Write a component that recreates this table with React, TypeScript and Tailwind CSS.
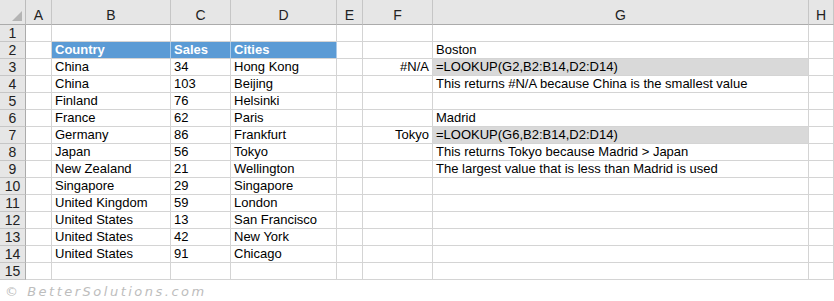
const cols = ["A", "B", "C", "D", "E", "F", "G", "H"]

type Cell = { text?: string; kind?: "head" | "formula" | "right" }

// row number -> column letter -> cell
const sheet: Record<number, Record<string, Cell>> = {
  2: {
    B: { text: "Country", kind: "head" },
    C: { text: "Sales", kind: "head" },
    D: { text: "Cities", kind: "head" },
    G: { text: "Boston" },
  },
  3: {
    B: { text: "China" },
    C: { text: "34" },
    D: { text: "Hong Kong" },
    F: { text: "#N/A", kind: "right" },
    G: { text: "=LOOKUP(G2,B2:B14,D2:D14)", kind: "formula" },
  },
  4: {
    B: { text: "China" },
    C: { text: "103" },
    D: { text: "Beijing" },
    G: { text: "This returns #N/A because China is the smallest value" },
  },
  5: { B: { text: "Finland" }, C: { text: "76" }, D: { text: "Helsinki" } },
  6: {
    B: { text: "France" },
    C: { text: "62" },
    D: { text: "Paris" },
    G: { text: "Madrid" },
  },
  7: {
    B: { text: "Germany" },
    C: { text: "86" },
    D: { text: "Frankfurt" },
    F: { text: "Tokyo", kind: "right" },
    G: { text: "=LOOKUP(G6,B2:B14,D2:D14)", kind: "formula" },
  },
  8: {
    B: { text: "Japan" },
    C: { text: "56" },
    D: { text: "Tokyo" },
    G: { text: "This returns Tokyo because Madrid > Japan" },
  },
  9: {
    B: { text: "New Zealand" },
    C: { text: "21" },
    D: { text: "Wellington" },
    G: { text: "The largest value that is less than Madrid is used" },
  },
  10: { B: { text: "Singapore" }, C: { text: "29" }, D: { text: "Singapore" } },
  11: { B: { text: "United Kingdom" }, C: { text: "59" }, D: { text: "London" } },
  12: { B: { text: "United States" }, C: { text: "13" }, D: { text: "San Francisco" } },
  13: { B: { text: "United States" }, C: { text: "42" }, D: { text: "New York" } },
  14: { B: { text: "United States" }, C: { text: "91" }, D: { text: "Chicago" } },
}

const rows = Array.from({ length: 15 }, (_, i) => i + 1)

function SheetCell({ cell }: { cell?: Cell }) {
  if (cell?.kind === "head") {
    return (
      <div className="flex h-[17px] items-end border-r border-b border-r-[#a9c9e8] border-b-[#d4d4d4] bg-[#5b9bd5] px-[3px] font-bold leading-[16px] text-white">
        {cell.text}
      </div>
    )
  }
  if (cell?.kind === "formula") {
    return (
      <div className="flex h-[17px] items-end border-r border-b border-[#d4d4d4] bg-[#d9d9d9] px-[3px] leading-[16px] whitespace-nowrap">
        {cell.text}
      </div>
    )
  }
  return (
    <div
      className={
        cell?.kind === "right"
          ? "flex h-[17px] items-end justify-end border-r border-b border-[#d4d4d4] px-[3px] leading-[16px] whitespace-nowrap"
          : "flex h-[17px] items-end border-r border-b border-[#d4d4d4] px-[3px] leading-[16px] whitespace-nowrap"
      }
    >
      {cell?.text ?? ""}
    </div>
  )
}

export default function App() {
  return (
    <div className="h-[301px] w-[834px] overflow-hidden bg-white font-['Liberation_Sans',Arial,sans-serif] text-[13px] text-black">
      <div className="grid grid-cols-[26px_26px_119px_60px_106px_26px_70px_376px_25px]">
        {/* Corner */}
        <div className="flex h-[25px] items-end justify-end border-r border-b border-r-[#bcbcbc] border-b-[#ababab] bg-[#e6e6e6] pr-[3px] pb-[3px]">
          <svg width="10" height="10" viewBox="0 0 10 10">
            <polygon points="10,0 10,10 0,10" fill="#b4b4b4" />
          </svg>
        </div>

        {/* Column headers */}
        {cols.map((c) => (
          <div
            key={c}
            className="flex h-[25px] items-end justify-center border-r border-b border-r-[#c6c6c6] border-b-[#ababab] bg-[#e6e6e6] pb-[1px] text-[14px] leading-[16px] text-[#222]"
          >
            {c}
          </div>
        ))}

        {rows.map((r) => (
          <div key={r} className="contents">
            <div className="flex h-[17px] items-end justify-center border-r border-b border-r-[#ababab] border-b-[#c6c6c6] bg-[#e6e6e6] text-[14px] leading-[16px] text-[#222]">
              {r}
            </div>
            {cols.map((c) => (
              <SheetCell key={c} cell={sheet[r]?.[c]} />
            ))}
          </div>
        ))}
      </div>

      <div className="pt-[2px] pl-[5px] font-['DejaVu_Sans',sans-serif] text-[13px] italic tracking-[2.5px] text-[#bdbdbd]">
        © BetterSolutions.com
      </div>
    </div>
  )
}
